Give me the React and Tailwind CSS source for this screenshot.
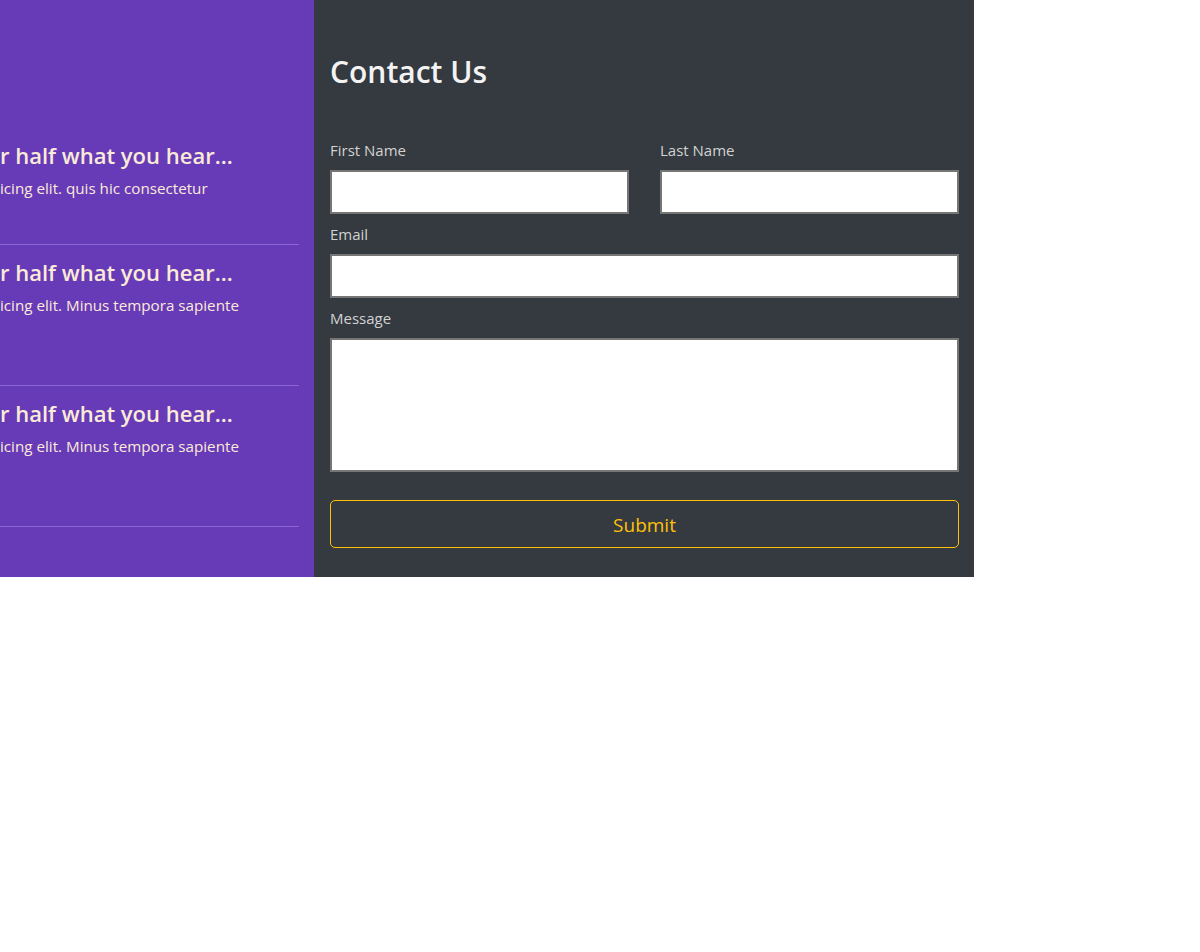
import React from "react";

const font = { fontFamily: '"Open Sans", "Noto Sans", sans-serif' };

function Clip({ hidden, visible, className }) {
  return (
    <div className={"flex whitespace-nowrap " + className}>
      <div className="w-0 flex justify-end shrink-0">
        <span className="shrink-0">{hidden}</span>
      </div>
      <span className="shrink-0">{visible}</span>
    </div>
  );
}

function Section({ first, para, extra }) {
  return (
    <div className={(first ? "" : "pt-[13px] ") + "pb-[44px] border-b border-[#8b65d5]"}>
      <Clip
        hidden="Believe nothing you read and only half what you hear... Never believe ove"
        visible="r half what you hear..."
        className="text-[22px] leading-[29px] font-semibold text-[#faebd7]"
      />
      <Clip
        hidden="Lorem ipsum dolor sit amet consectetur adipis"
        visible={para}
        className="mt-[6px] text-[15.2px] leading-[24px] text-[#faebd7]"
      />
      {extra && (
        <Clip
          hidden="debitis."
          visible=""
          className="text-[15px] leading-[24px] h-[24px] text-[#faebd7]"
        />
      )}
    </div>
  );
}

export default function App() {
  return (
    <div className="w-[974px] flex bg-white" style={font}>
      <div className="w-[314px] h-[577px] bg-[#673ab7] overflow-hidden pr-[15px] pt-[141px]">
        <Section first para="icing elit. quis hic consectetur" />
        <Section para="icing elit. Minus tempora sapiente" extra />
        <Section para="icing elit. Minus tempora sapiente" extra />
      </div>
      <div className="w-[660px] h-[577px] bg-[#343a40] pl-4 pr-[15px]">
        <h2 className="mt-[53px] mb-[47px] text-[30px] leading-[38px] font-semibold text-[#f3f3f3]">
          Contact Us
        </h2>
        <div className="grid grid-cols-2 gap-x-[31px]">
          <div>
            <label className="block text-[15px] leading-[24px] text-[#d2d2d2] mb-2">First Name</label>
            <input type="text" className="block w-full h-[44px] bg-white border-2 border-[#767676]" />
          </div>
          <div>
            <label className="block text-[15px] leading-[24px] text-[#d2d2d2] mb-2">Last Name</label>
            <input type="text" className="block w-full h-[44px] bg-white border-2 border-[#767676]" />
          </div>
        </div>
        <label className="block mt-2 text-[15px] leading-[24px] text-[#d2d2d2] mb-2">Email</label>
        <input type="email" className="block w-full h-[44px] bg-white border-2 border-[#767676]" />
        <label className="block mt-2 text-[15px] leading-[24px] text-[#d2d2d2] mb-2">Message</label>
        <textarea className="block w-full h-[134px] bg-white border-2 border-[#767676] resize-none" />
        <button className="mt-[28px] block w-full h-[48px] pt-[2px] border border-[#ffc107] rounded-[5px] text-[#ffc107] text-[19px] bg-transparent">
          Submit
        </button>
      </div>
    </div>
  );
}
